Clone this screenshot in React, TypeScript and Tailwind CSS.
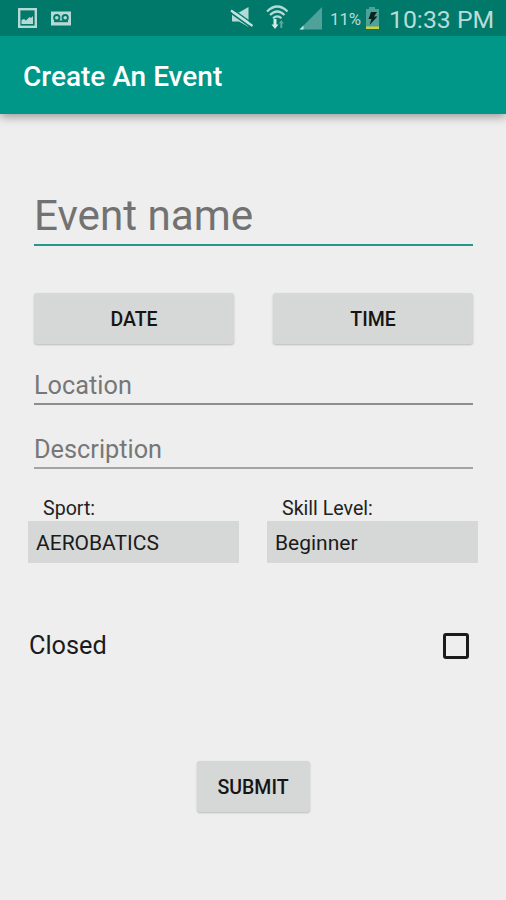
import React from "react";

function StatusBar() {
  return (
    <div className="flex h-[36px] items-center bg-[#00796b] text-[#b9dcd7]">
      <svg width="328" height="36" viewBox="0 0 328 36" className="shrink-0">
        <rect x="19.2" y="9.2" width="16.6" height="17.6" fill="none" stroke="#b5dad5" strokeWidth="2.4" />
        <path d="M21.500 24v-4l2.500-1 2 1.500 3.500-3.500 1.500 1 2-2v8z" fill="#b5dad5" />
        <rect x="51" y="11.5" width="20" height="14" fill="#b5dad5" />
        <g fill="none" stroke="#00796b" strokeWidth="1.8">
          <circle cx="56.8" cy="17.7" r="2.7" />
          <circle cx="65.2" cy="17.7" r="2.7" />
          <path d="M54 21.300h14" />
        </g>
        <path d="M232 12.500h7l9.500-5.500v20l-9.500-5.500h-7z" fill="#b5dad5" />
        <path d="M232 8.800l21 15" stroke="#00796b" strokeWidth="1.4" />
        <path d="M231 10.500l21.500 15.500" stroke="#c5e3df" strokeWidth="2.2" />
        <path d="M230 12.300l21.500 15.500" stroke="#00796b" strokeWidth="1.6" />
        <g fill="none" stroke="#b5dad5" strokeWidth="2.2">
          <path d="M267 11.500Q277.300 1.500 287.500 11.500" />
          <path d="M270 15Q277.300 8 284.500 15" />
          <path d="M273 18.300Q277.300 14.500 281.500 18.300" />
        </g>
        <path d="M273.500 19h3v5.500h2l-3.500 4.500-3.500-4.500h2z" fill="#d4ebe8" />
        <path d="M280.300 28v-4.500h-1.500l2.500-3.500 2.500 3.500h-1.500v4.500z" fill="#5da99f" />
        <path d="M299.500 29.500L322 7v22.500z" fill="#4fa299" />
        <path d="M299.500 29.500l4-4v4z" fill="#c5e3df" />
      </svg>
      <span className="mt-[2px] ml-[2px] w-[33px] text-[16.800px] leading-[20px] whitespace-nowrap">11%</span>
      <svg width="17" height="24" viewBox="0 0 17 24" className="ml-[1px] shrink-0">
        <path d="M5 1h6v2h4v20H2V3h3z" fill="#4fa299" />
        <path d="M2 20.500h13V23H2z" fill="#c8d23c" />
        <path d="M7 6h6l-3 4.500h3.500L5.500 19l2-6H4.500z" fill="#08241f" />
      </svg>
      <span className="mt-[4px] ml-[8px] text-[24.800px] leading-[30px] whitespace-nowrap">10:33 PM</span>
    </div>
  );
}

function RaisedButton({ label, className }: { label: string; className: string }) {
  return (
    <button
      className={`flex h-[51px] items-center justify-center rounded-[3px] bg-[#d6d7d7] pt-[2px] text-[19.500px] font-medium text-[#151515] shadow-[0_1px_2px_rgba(0,0,0,0.22)] ${className}`}
    >
      {label}
    </button>
  );
}

function Picker({ label, value }: { label: string; value: string }) {
  return (
    <div className="w-[211px]">
      <div className="h-[24px] pl-[15px] text-[19.600px] leading-[24px] text-[#222]">{label}</div>
      <div className="flex h-[42px] items-center bg-[#d6d7d7] pt-[4px] pl-[8px] text-[21px] text-[#1b1b1b]">{value}</div>
    </div>
  );
}

export default function App() {
  return (
    <main className="h-[900px] w-[506px] overflow-hidden bg-[#eeeeee] font-['Roboto',sans-serif]">
      <header className="shadow-[0_3px_9px_rgba(0,0,0,0.35)]">
        <StatusBar />
        <div className="flex h-[78px] items-center bg-[#009688] pt-[3px] pl-[23px]">
          <h1 className="text-[28px] leading-[32px] font-medium whitespace-nowrap text-white">Create An Event</h1>
        </div>
      </header>

      <form className="pt-[74px]" onSubmit={(e) => e.preventDefault()}>
        <div className="mx-[34px] h-[58px] w-[439px] border-b-[2px] border-[#26998c] text-[42.200px] leading-[55px] text-[#727272]">
          Event name
        </div>
        <div className="mx-[34px] mt-[47px] flex w-[439px] justify-between">
          <RaisedButton label="DATE" className="w-[200px]" />
          <RaisedButton label="TIME" className="w-[200px]" />
        </div>
        <div className="mx-[34px] mt-[21px] h-[40px] w-[439px] border-b-[2px] border-[#8c8e8d] text-[25.300px] leading-[42px] text-[#777]">
          Location
        </div>
        <div className="mx-[34px] mt-[24px] h-[40px] w-[439px] border-b-[2px] border-[#a3a4a4] text-[25.300px] leading-[42px] text-[#777]">
          Description
        </div>
        <div className="mt-[28px] ml-[28px] flex gap-[28px]">
          <Picker label="Sport:" value="AEROBATICS" />
          <Picker label="Skill Level:" value="Beginner" />
        </div>
        <label className="mt-[66px] mr-[37px] ml-[29px] flex h-[32px] items-center justify-between text-[25.300px] leading-[32px] text-[#1b1b1b]">
          <span className="mt-[1px]">Closed</span>
          <span className="mt-[2px] h-[26px] w-[26px] rounded-[3px] border-[3px] border-[#1b1b1b]" />
        </label>
        <div className="mt-[100px] flex justify-center">
          <RaisedButton label="SUBMIT" className="w-[113px]" />
        </div>
      </form>
    </main>
  );
}
